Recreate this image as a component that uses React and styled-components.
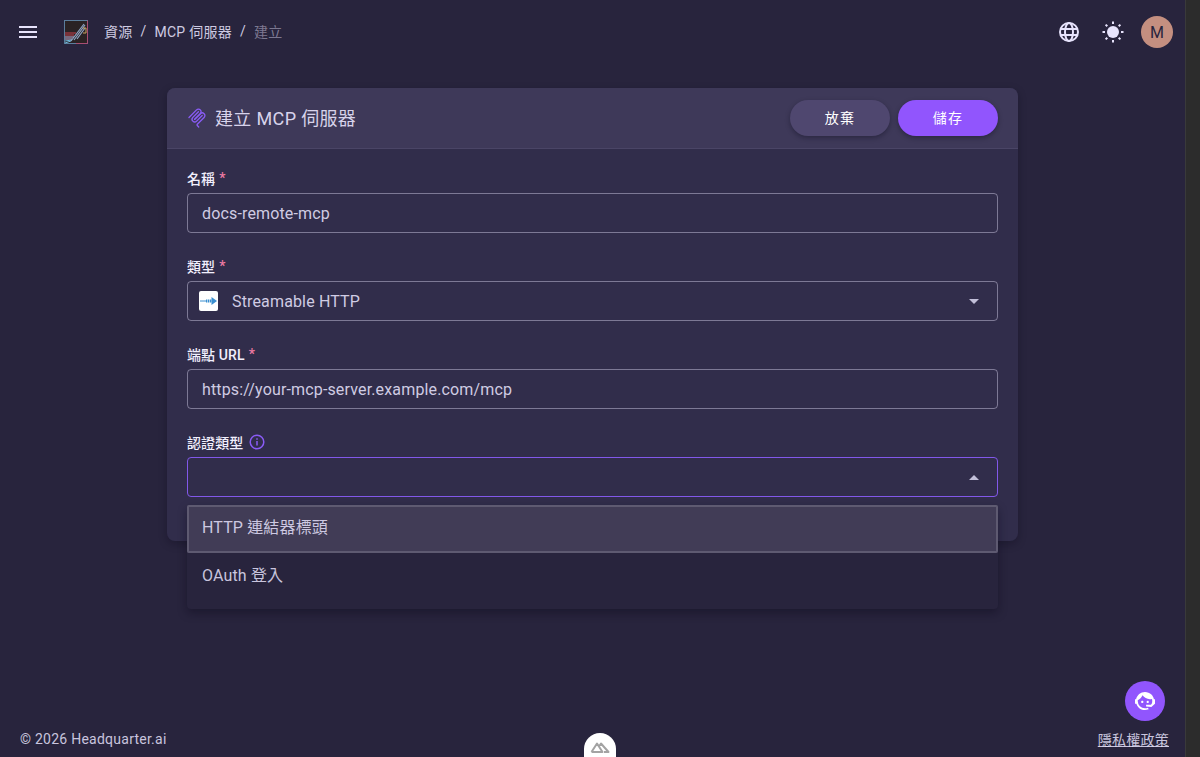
import React from "react";
import styled, { createGlobalStyle } from "styled-components";

const Global = createGlobalStyle`
  html, body { margin: 0; padding: 0; height: 100%; overflow: hidden; background: #28243d; }
  #root { height: 100%; }
  * { box-sizing: border-box; }
  body { font-family: Roboto, "Noto Sans CJK TC", sans-serif; color: #e7e3fc; }
`;

const Shell = styled.div`
  display: flex;
  height: 757px;
`;
const Page = styled.div`
  position: relative;
  flex: 1;
  display: flex;
  flex-direction: column;
  background: #28243d;
`;
const Scrollbar = styled.div`
  width: 15px;
  background: #2c2c2c;
  border-left: 1px solid #3a3a3a;
`;
const TopBar = styled.header`
  height: 64px;
  display: flex;
  align-items: center;
  padding: 0 12px 0 16px;
`;
const MenuBtn = styled.button`
  width: 24px;
  height: 24px;
  padding: 0;
  border: 0;
  background: none;
  color: #e7e3fc;
  display: flex;
`;
const Logo = styled.svg`
  width: 24px;
  height: 24px;
  margin-left: 24px;
`;
const Crumbs = styled.nav`
  display: flex;
  align-items: center;
  gap: 8px;
  margin: 0 0 2px 16px;
  font-size: 14px;
  letter-spacing: 0.25px;
`;
const Crumb = styled.span`
  color: ${(p) => (p.$muted ? "rgba(231,227,252,0.45)" : "rgba(231,227,252,0.88)")};
`;
const Spacer = styled.div`
  flex: 1;
`;
const BarIcon = styled.button`
  width: 24px;
  height: 24px;
  padding: 0;
  border: 0;
  background: none;
  color: #e7e3fc;
  display: flex;
  margin-right: ${(p) => p.$gap}px;
`;
const Avatar = styled.div`
  width: 32px;
  height: 32px;
  border-radius: 50%;
  background: #c48f80;
  color: #28243d;
  display: flex;
  align-items: center;
  justify-content: center;
  font-size: 16px;
`;
const Main = styled.main`
  flex: 1;
  padding-top: 24px;
  display: flex;
  justify-content: center;
  align-items: flex-start;
`;
const Card = styled.section`
  position: relative;
  width: 851px;
  height: 453px;
  border-radius: 8px;
  background: #312d4b;
  box-shadow: 0 3px 8px rgba(10, 8, 24, 0.3);
`;
const CardHead = styled.div`
  height: 61px;
  display: flex;
  align-items: center;
  padding: 0 20px;
  background: #3e3959;
  border-bottom: 1px solid #4a4566;
  border-radius: 8px 8px 0 0;
`;
const Title = styled.h1`
  margin: 0 0 3px 8px;
  font-size: 18px;
  font-weight: 400;
  letter-spacing: 0.35px;
  color: rgba(231, 227, 252, 0.92);
`;
const Pill = styled.button`
  width: 100px;
  height: 36px;
  margin-left: 8px;
  padding: 0 0 2px;
  border: 0;
  border-radius: 18px;
  background: ${(p) => (p.$primary ? "#9155fd" : "#4f476f")};
  color: #fff;
  font: 400 14px Roboto, "Noto Sans CJK TC", sans-serif;
  letter-spacing: 1.2px;
  box-shadow: 0 2px 5px rgba(10, 8, 24, 0.35);
`;
const Form = styled.div`
  padding: 20px 20px 0;
  display: flex;
  flex-direction: column;
  gap: 24px;
`;
const Field = styled.div`
  display: flex;
  flex-direction: column;
  gap: 4px;
`;
const Label = styled.label`
  height: 20px;
  padding-bottom: 2px;
  display: flex;
  align-items: center;
  gap: 4px;
  font-size: 14px;
  font-weight: 500;
  letter-spacing: 0.1px;
  color: #f1effd;
`;
const Star = styled.span`
  color: #ee7aa3;
`;
const Control = styled.div`
  height: 40px;
  display: flex;
  align-items: center;
  padding: 0 14px;
  border-radius: 4px;
  border: 1px solid ${(p) => (p.$focus ? "#8258ea" : "rgba(231,227,252,0.42)")};
  font-size: 16px;
  letter-spacing: 0.15px;
  color: rgba(231, 227, 252, 0.88);
`;
const Value = styled.span`
  flex: 1;
`;
const Arrow = styled.span`
  width: 0;
  height: 0;
  margin-right: 4px;
  border-left: 5px solid transparent;
  border-right: 5px solid transparent;
  ${(p) =>
    p.$up
      ? "border-bottom: 5px solid rgba(231,227,252,0.8);"
      : "border-top: 5px solid rgba(231,227,252,0.8);"}
`;
const TypeIcon = styled.svg`
  width: 19px;
  height: 20px;
  margin: 0 14px 0 -3px;
  border-radius: 2px;
  background: #fff;
`;
const Info = styled.svg`
  width: 16px;
  height: 16px;
  margin-left: 2px;
  color: #8a5cf6;
`;
const Menu = styled.div`
  position: absolute;
  left: 20px;
  top: 417px;
  width: 811px;
  height: 104px;
  background: #28243d;
  border-radius: 4px;
  box-shadow: 0 4px 10px rgba(10, 8, 24, 0.4);
`;
const Option = styled.div`
  height: 48px;
  display: flex;
  align-items: center;
  padding: 0 15px 6px;
  font-size: 16px;
  letter-spacing: 0.15px;
  color: rgba(231, 227, 252, 0.85);
  ${(p) =>
    p.$active &&
    "background: #413c56; outline: 2px solid #5e5a71; outline-offset: -2px; border-radius: 2px;"}
`;
const Footer = styled.footer`
  height: 38px;
  display: flex;
  align-items: center;
  justify-content: space-between;
  padding: 2px 16px 0 20px;
  font-size: 14px;
  letter-spacing: 0.25px;
  color: rgba(231, 227, 252, 0.85);
`;
const Policy = styled.a`
  color: rgba(231, 227, 252, 0.85);
  text-decoration: underline;
`;
const Chat = styled.button`
  position: absolute;
  right: 20px;
  bottom: 36px;
  width: 40px;
  height: 40px;
  padding: 0;
  border: 0;
  border-radius: 50%;
  background: #9155fd;
  display: flex;
  align-items: center;
  justify-content: center;
`;
const Nuxt = styled.div`
  position: absolute;
  left: 584px;
  bottom: 0;
  width: 32px;
  height: 24px;
  background: #fff;
  border-radius: 16px 16px 0 0;
  display: flex;
  justify-content: center;
  padding-top: 7px;
`;

export default function App() {
  return (
    <>
      <Global />
      <Shell>
        <Page>
          <TopBar>
            <MenuBtn aria-label="menu">
              <svg width="24" height="24" viewBox="0 0 24 24" fill="currentColor">
                <path d="M3 6h18v2H3zM3 11h18v2H3zM3 16h18v2H3z" />
              </svg>
            </MenuBtn>
            <Logo viewBox="0 0 24 24">
              <rect x="0.5" y="0.5" width="23" height="23" fill="#2a2224" stroke="#5b7d9c" />
              <path d="M23.5 0.5V23.5H12" fill="none" stroke="#a84d72" />
              <path d="M1 13h11M1 15h9" stroke="#c9434f" strokeWidth="1" />
              <path d="M1 17h9M1 19h7" stroke="#c5b0d8" strokeWidth="1" />
              <path d="M1 21l7-1M1 23l6-2" stroke="#6fb7dc" strokeWidth="1" />
              <path d="M7 21L20 4M10 20L21 5M13 19L21 8" stroke="#8fa4c4" strokeWidth="1.2" />
              <path d="M19 8h3v5h-3" fill="none" stroke="#c9a25e" strokeWidth="1" />
            </Logo>
            <Crumbs>
              <Crumb>資源</Crumb>
              <Crumb>/</Crumb>
              <Crumb>MCP 伺服器</Crumb>
              <Crumb>/</Crumb>
              <Crumb $muted>建立</Crumb>
            </Crumbs>
            <Spacer />
            <BarIcon $gap={20} aria-label="language">
              <svg width="24" height="24" viewBox="0 0 24 24" fill="none" stroke="currentColor" strokeWidth="2">
                <circle cx="12" cy="12" r="9" />
                <ellipse cx="12" cy="12" rx="4" ry="9" />
                <path d="M3.5 9h17M3.5 15h17" />
              </svg>
            </BarIcon>
            <BarIcon $gap={16} aria-label="theme">
              <svg width="24" height="24" viewBox="0 0 24 24" fill="currentColor" stroke="currentColor" strokeWidth="2">
                <circle cx="12" cy="12" r="6" stroke="none" />
                <path d="M12 1.5v2.5M12 20v2.500M1.500 12H4M20 12h2.500M4.600 4.600l1.700 1.700M17.700 17.700l1.700 1.700M4.600 19.400l1.700-1.700M17.700 6.300l1.700-1.700" />
              </svg>
            </BarIcon>
            <Avatar>M</Avatar>
          </TopBar>
          <Main>
            <Card>
              <CardHead>
                <svg width="20" height="20" viewBox="0 0 180 180" fill="none" stroke="#8a5cf6" strokeWidth="12" strokeLinecap="round">
                  <path d="M18 84.8528L85.8822 16.9706C95.2548 7.59798 110.451 7.59798 119.823 16.9706C129.196 26.3431 129.196 41.5391 119.823 50.9117L68.5581 102.177" />
                  <path d="M69.2652 101.47L119.823 50.9117C129.196 41.5391 144.392 41.5391 153.765 50.9117L154.118 51.2652C163.491 60.6378 163.491 75.8338 154.118 85.2063L92.7248 146.6C89.6006 149.724 89.6006 154.789 92.7248 157.913L105.331 170.52" />
                  <path d="M102.853 33.9411L52.6482 84.1457C43.2756 93.5183 43.2756 108.714 52.6482 118.087C62.0208 127.459 77.2167 127.459 86.5893 118.087L136.794 67.8822" />
                </svg>
                <Title>建立 MCP 伺服器</Title>
                <Spacer />
                <Pill>放棄</Pill>
                <Pill $primary>儲存</Pill>
              </CardHead>
              <Form>
                <Field>
                  <Label>名稱 <Star>*</Star></Label>
                  <Control><Value>docs-remote-mcp</Value></Control>
                </Field>
                <Field>
                  <Label>類型 <Star>*</Star></Label>
                  <Control>
                    <TypeIcon viewBox="0 0 19 20">
                      <path d="M1 10h6" stroke="#3b8fd0" strokeWidth="1" />
                      <path d="M7 10h6" stroke="#3b8fd0" strokeWidth="3" strokeDasharray="1.400 0.600" />
                      <path d="M12.500 6l5.500 4-5.500 4z" fill="#3b8fd0" />
                    </TypeIcon>
                    <Value>Streamable HTTP</Value>
                    <Arrow />
                  </Control>
                </Field>
                <Field>
                  <Label>端點 URL <Star>*</Star></Label>
                  <Control><Value>https://your-mcp-server.example.com/mcp</Value></Control>
                </Field>
                <Field>
                  <Label>
                    認證類型
                    <Info viewBox="0 0 16 16" fill="none" stroke="currentColor" strokeWidth="1.500">
                      <circle cx="8" cy="8" r="6.800" />
                      <path d="M8 7v4.500" />
                      <path d="M8 4.300v1.400" />
                    </Info>
                  </Label>
                  <Control $focus><Value /><Arrow $up /></Control>
                </Field>
              </Form>
              <Menu>
                <Option $active>HTTP 連結器標頭</Option>
                <Option>OAuth 登入</Option>
              </Menu>
            </Card>
          </Main>
          <Footer>
            <span>© 2026 Headquarter.ai</span>
            <Policy>隱私權政策</Policy>
          </Footer>
          <Chat aria-label="support">
            <svg width="24" height="24" viewBox="0 0 24 24" fill="#fff">
              <path d="M18.72,14.76C19.07,13.91 19.26,13 19.26,12C19.26,11.28 19.15,10.59 18.96,9.95C18.31,10.1 17.63,10.18 16.92,10.18C13.86,10.18 11.15,8.67 9.5,6.34C8.61,8.5 6.91,10.26 4.77,11.22C4.73,11.47 4.73,11.74 4.73,12A7.27,7.27 0 0,0 12,19.27C13.05,19.27 14.06,19.04 14.97,18.63C15.54,19.72 15.8,20.26 15.78,20.26C14.14,20.81 12.87,21.08 12,21.08C9.58,21.08 7.27,20.13 5.57,18.42C4.53,17.38 3.76,16.11 3.33,14.73H2V10.18H3.09C3.93,6.04 7.6,2.92 12,2.92C14.4,2.92 16.71,3.87 18.42,5.58C19.69,6.84 20.54,8.45 20.89,10.18H22V14.67H22V14.69L22,14.73H21.94L18.38,18L13.08,17.4V15.73H17.91L18.72,14.76M9.27,11.77C9.57,11.77 9.86,11.89 10.07,12.11C10.28,12.32 10.4,12.61 10.4,12.91C10.4,13.21 10.28,13.5 10.07,13.71C9.86,13.92 9.57,14.04 9.27,14.04C8.64,14.04 8.13,13.54 8.13,12.91C8.13,12.28 8.64,11.77 9.27,11.77M14.72,11.77C15.35,11.77 15.85,12.28 15.85,12.91C15.85,13.54 15.35,14.04 14.72,14.04C14.09,14.04 13.58,13.54 13.58,12.91A1.14,1.14 0 0,1 14.72,11.77Z" />
            </svg>
          </Chat>
          <Nuxt>
            <svg width="20" height="14" viewBox="0 0 20 14" fill="none" stroke="#a3a3a3" strokeWidth="2" strokeLinejoin="round">
              <path d="M1.500 12L7 3.500L12.500 12H1.500M9 6.500L11 3.500L18.500 12H14" />
            </svg>
          </Nuxt>
        </Page>
        <Scrollbar />
      </Shell>
    </>
  );
}
